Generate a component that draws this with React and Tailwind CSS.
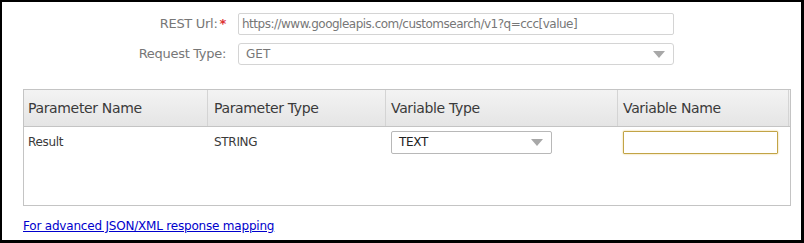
import React from "react";

const font = { fontFamily: "'DejaVu Sans', Verdana, sans-serif" };

function Arrow() {
  return (
    <svg width="12" height="7" viewBox="0 0 12 7" className="shrink-0">
      <path d="M0 0 L12 0 L6 7 Z" fill="#a8a8a8" />
    </svg>
  );
}

export default function App() {
  return (
    <div
      className="w-[804px] h-[243px] bg-white border-t-2 border-l-2 border-r-[3px] border-b-[3px] border-black overflow-hidden"
      style={font}
    >
      <div className="flex flex-col gap-[8px] pt-[11px]">
        <div className="flex items-center">
          <div className="w-[236px] pr-[12px] flex justify-end items-center text-[13px] text-[#777] tracking-[-0.3px]">
            REST Url:<span className="text-[#d33] ml-[2px] font-bold">*</span>
          </div>
          <div className="w-[436px] h-[22px] border border-[#d4d4d4] rounded-[2px] px-[3px] flex items-center text-[12px] text-[#777] tracking-[-0.5px]">
            https://www.googleapis.com/customsearch/v1?q=ccc[value]
          </div>
        </div>
        <div className="flex items-center">
          <div className="w-[236px] pr-[12px] flex justify-end text-[13px] text-[#777] tracking-[-0.3px]">
            Request Type:
          </div>
          <div className="w-[436px] h-[22px] border border-[#d4d4d4] rounded-[3px] pl-[7px] pr-[8px] flex items-center justify-between text-[12px] text-[#777]">
            <span>GET</span>
            <Arrow />
          </div>
        </div>
      </div>

      <div className="ml-[21px] mt-[24px] w-[768px] h-[117px] border border-[#c4c4c4]">
        <div className="flex h-[37px] bg-gradient-to-b from-[#f3f3f3] to-[#e5e5e5] border-b border-[#c4c4c4] text-[14px] text-[#3a3a3a] tracking-[-0.35px]">
          <div className="w-[184px] border-r border-[#d4d4d4] pl-[4px] flex items-center">Parameter Name</div>
          <div className="w-[178px] border-r border-[#d4d4d4] pl-[6px] flex items-center">Parameter Type</div>
          <div className="w-[232px] border-r border-[#d4d4d4] pl-[5px] flex items-center">Variable Type</div>
          <div className="flex-1 pl-[5px] flex items-center border-r border-[#d4d4d4] mr-[1px]">Variable Name</div>
        </div>
        <div className="flex h-[30px] items-center text-[12px] text-[#3a3a3a] tracking-[-0.3px]">
          <div className="w-[184px] pl-[4px]">Result</div>
          <div className="w-[178px] pl-[6px]">STRING</div>
          <div className="w-[232px] pl-[5px]">
            <div className="w-[161px] h-[23px] border border-[#b8b8b8] rounded-[2px] pl-[7px] pr-[8px] flex items-center justify-between text-[#222]">
              <span>TEXT</span>
              <Arrow />
            </div>
          </div>
          <div className="flex-1 pl-[5px]">
            <div className="w-[155px] h-[23px] border border-[#c2a446] rounded-[1px] shadow-[0_0_2px_#e6c770]" />
          </div>
        </div>
      </div>

      <div className="ml-[21px] mt-[7px]">
        <a href="#" className="text-[12px] text-[#0000cc] underline tracking-[-0.2px]">
          For advanced JSON/XML response mapping
        </a>
      </div>
    </div>
  );
}
